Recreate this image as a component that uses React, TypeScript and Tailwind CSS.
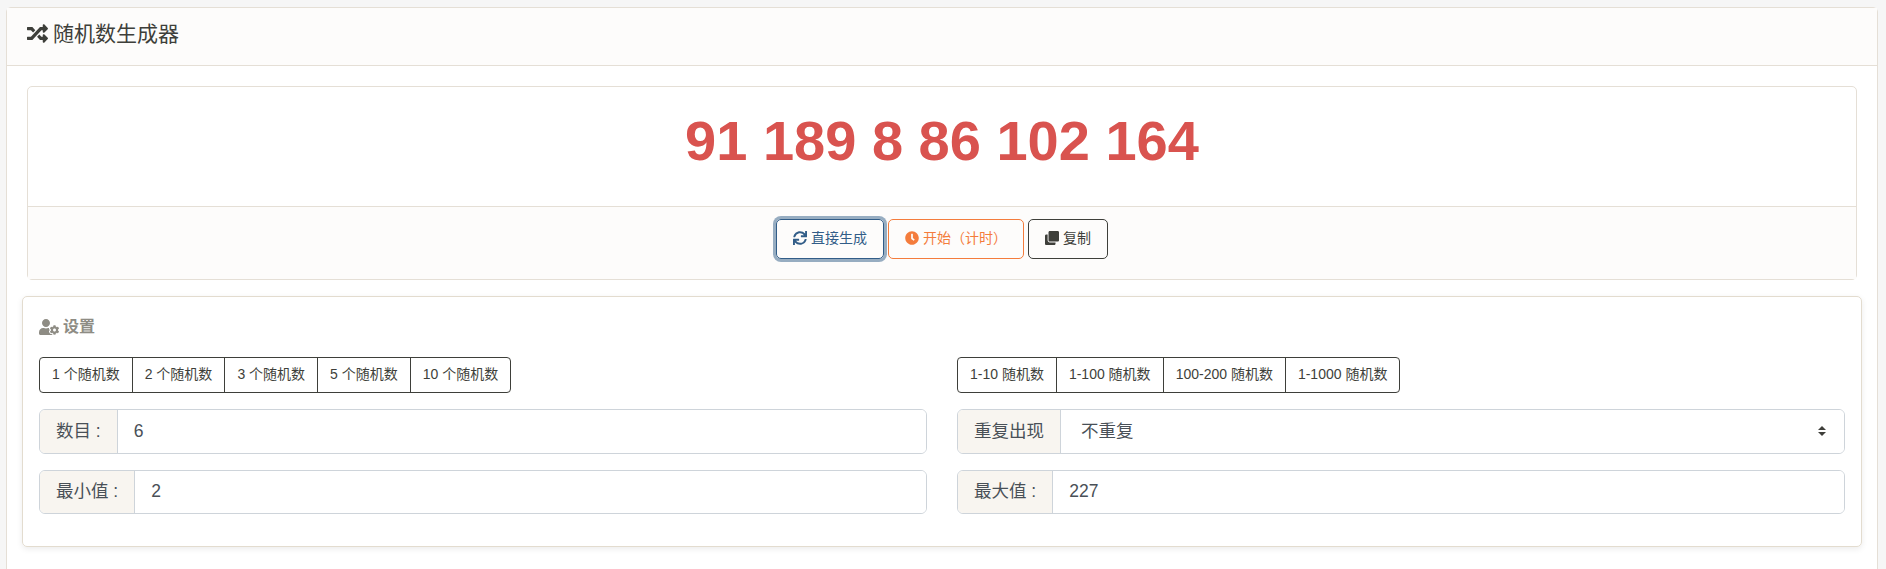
import { FaClock, FaClone, FaRandom, FaSync, FaUserCog } from "react-icons/fa";

const countButtons = ["1 个随机数", "2 个随机数", "3 个随机数", "5 个随机数", "10 个随机数"];
const rangeButtons = ["1-10 随机数", "1-100 随机数", "100-200 随机数", "1-1000 随机数"];

function ButtonGroup({ items }: { items: string[] }) {
  return (
    <div className="flex h-[36px] w-fit rounded-[4px] border border-[#3e3f3a]">
      {items.map((item) => (
        <button key={item} className="border-l border-[#3e3f3a] px-[12px] pb-[2px] text-[14px] text-[#3e3f3a] first:border-l-0">
          {item}
        </button>
      ))}
    </div>
  );
}

function Addon({ label }: { label: string }) {
  return (
    <span className="flex shrink-0 items-center whitespace-pre border-r border-[#ced4da] bg-[#f8f5f0] px-[16px] pb-[1px] text-[17.5px] text-[#495057]">
      {label}
    </span>
  );
}

function InputRow({ label, value, height }: { label: string; value: string; height: string }) {
  return (
    <div className={`flex overflow-hidden rounded-[6px] border border-[#ced4da] ${height}`}>
      <Addon label={label} />
      <input defaultValue={value} className="min-w-0 flex-1 bg-white pb-[1px] pl-[16px] text-[17.5px] text-[#495057] outline-none" />
    </div>
  );
}

export default function App() {
  return (
    <div className="h-[569px] overflow-hidden bg-[#f6f6f6] pl-[6px] pr-[8px] pt-[7px] font-['Liberation_Sans','Noto_Sans_CJK_SC',sans-serif] text-[#3e3f3a]">
      <div className="h-[600px] rounded-t-[5px] border border-[#e5dfd6] bg-white">
        {/* Header */}
        <div className="flex h-[58px] items-center gap-[5px] border-b border-[#e5dfd6] bg-[#fdfcfb] pb-[6px] pl-[20px] text-[21px]">
          <FaRandom className="size-[21px]" />
          <h1>随机数生成器</h1>
        </div>

        {/* Result */}
        <div className="mx-[20px] mt-[20px] rounded-[5px] border border-[#e5dfd6]">
          <div className="flex h-[119px] items-center justify-center pb-[12px] text-[56px] font-bold text-[#d9534f]">
            91 189 8 86 102 164
          </div>
          <div className="flex h-[73px] items-start justify-center gap-[4px] border-t border-[#e5dfd6] bg-[#fdfcfb] pt-[12px]">
            <button className="flex h-[40px] w-[108px] items-center justify-center gap-[4px] rounded-[5px] border border-[#325d88] pb-[2px] text-[14px] text-[#325d88] shadow-[0_0_0_3px_rgba(50,93,136,0.5)]">
              <FaSync className="size-[14px]" />
              直接生成
            </button>
            <button className="flex h-[40px] w-[136px] items-center justify-center gap-[4px] rounded-[5px] border border-[#f47c3c] pb-[2px] text-[14px] text-[#f47c3c]">
              <FaClock className="size-[14px]" />
              开始（计时）
            </button>
            <button className="flex h-[40px] w-[80px] items-center justify-center gap-[4px] rounded-[5px] border border-[#3e3f3a] pb-[2px] text-[14px] text-[#3e3f3a]">
              <FaClone className="size-[14px]" />
              复制
            </button>
          </div>
        </div>

        {/* Settings */}
        <div className="mx-[15px] mt-[16px] h-[251px] rounded-[5px] border border-[#e3dccf] px-[16px] pt-[20px] shadow-[0_2px_6px_rgba(0,0,0,0.08)]">
          <div className="flex h-[20px] items-center gap-[4px] text-[16px] font-bold text-[#8e8c84]">
            <FaUserCog className="size-[20px]" />
            设置
          </div>
          <div className="mt-[20px] grid grid-cols-2 gap-x-[30px] gap-y-[16px]">
            <ButtonGroup items={countButtons} />
            <ButtonGroup items={rangeButtons} />
            <div className="flex flex-col gap-[16px]">
              <InputRow label="数目 :" value="6" height="h-[45px]" />
              <InputRow label="最小值 :" value="2" height="h-[44px]" />
            </div>
            <div className="flex flex-col gap-[16px]">
              <div className="relative flex h-[45px] overflow-hidden rounded-[6px] border border-[#ced4da]">
                <Addon label="重复出现" />
                <select className="min-w-0 flex-1 appearance-none bg-white pb-[1px] pl-[20px] text-[17.5px] text-[#495057] outline-none">
                  <option>不重复</option>
                  <option>可重复</option>
                </select>
                <svg className="pointer-events-none absolute right-[17px] top-[16px] size-[10px]" viewBox="0 0 10 10" fill="#3e3f3a">
                  <path d="M5 0 L9 4 H1 Z M5 10 L1 6 H9 Z" />
                </svg>
              </div>
              <InputRow label="最大值 :" value="227" height="h-[44px]" />
            </div>
          </div>
        </div>
      </div>
    </div>
  );
}
